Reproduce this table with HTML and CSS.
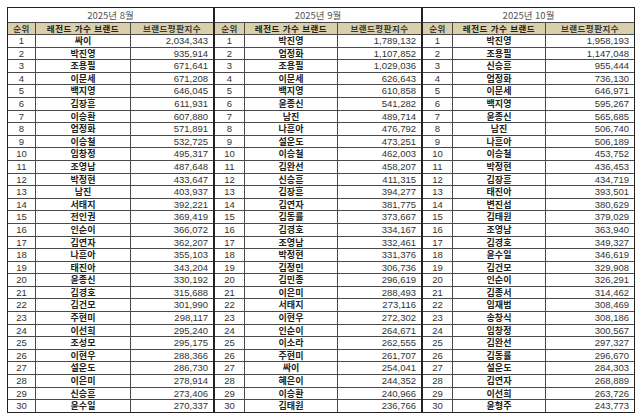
FILE: index.html
```html
<!DOCTYPE html>
<html lang="ko">
<head>
<meta charset="utf-8">
<title>레전드 가수 브랜드평판지수</title>
<link rel="stylesheet" href="styles.css">
</head>
<body>
<div class="wrap">
  <div class="month m1">
    <div class="title">2025년 8월</div>
    <div class="row head"><span>순위</span><span>레전드 가수 브랜드</span><span>브랜드평판지수</span></div>
    <div class="row"><span>1</span><span>싸이</span><span>2,034,343</span></div>
    <div class="row"><span>2</span><span>박진영</span><span>935,914</span></div>
    <div class="row"><span>3</span><span>조용필</span><span>671,641</span></div>
    <div class="row"><span>4</span><span>이문세</span><span>671,208</span></div>
    <div class="row"><span>5</span><span>백지영</span><span>646,045</span></div>
    <div class="row"><span>6</span><span>김장훈</span><span>611,931</span></div>
    <div class="row"><span>7</span><span>이승환</span><span>607,880</span></div>
    <div class="row"><span>8</span><span>엄정화</span><span>571,891</span></div>
    <div class="row"><span>9</span><span>이승철</span><span>532,725</span></div>
    <div class="row"><span>10</span><span>임창정</span><span>495,317</span></div>
    <div class="row"><span>11</span><span>조영남</span><span>487,648</span></div>
    <div class="row"><span>12</span><span>박정현</span><span>433,647</span></div>
    <div class="row"><span>13</span><span>남진</span><span>403,937</span></div>
    <div class="row"><span>14</span><span>서태지</span><span>392,221</span></div>
    <div class="row"><span>15</span><span>전인권</span><span>369,419</span></div>
    <div class="row"><span>16</span><span>인순이</span><span>366,072</span></div>
    <div class="row"><span>17</span><span>김연자</span><span>362,207</span></div>
    <div class="row"><span>18</span><span>나훈아</span><span>355,103</span></div>
    <div class="row"><span>19</span><span>태진아</span><span>343,204</span></div>
    <div class="row"><span>20</span><span>윤종신</span><span>330,192</span></div>
    <div class="row"><span>21</span><span>김경호</span><span>315,688</span></div>
    <div class="row"><span>22</span><span>김건모</span><span>301,990</span></div>
    <div class="row"><span>23</span><span>주현미</span><span>298,117</span></div>
    <div class="row"><span>24</span><span>이선희</span><span>295,240</span></div>
    <div class="row"><span>25</span><span>조성모</span><span>295,175</span></div>
    <div class="row"><span>26</span><span>이현우</span><span>288,366</span></div>
    <div class="row"><span>27</span><span>설운도</span><span>286,730</span></div>
    <div class="row"><span>28</span><span>이은미</span><span>278,914</span></div>
    <div class="row"><span>29</span><span>신승훈</span><span>273,406</span></div>
    <div class="row"><span>30</span><span>윤수일</span><span>270,337</span></div>
  </div>
  <div class="month m2">
    <div class="title">2025년 9월</div>
    <div class="row head"><span>순위</span><span>레전드 가수 브랜드</span><span>브랜드평판지수</span></div>
    <div class="row"><span>1</span><span>박진영</span><span>1,789,132</span></div>
    <div class="row"><span>2</span><span>엄정화</span><span>1,107,852</span></div>
    <div class="row"><span>3</span><span>조용필</span><span>1,029,036</span></div>
    <div class="row"><span>4</span><span>이문세</span><span>626,643</span></div>
    <div class="row"><span>5</span><span>백지영</span><span>610,858</span></div>
    <div class="row"><span>6</span><span>윤종신</span><span>541,282</span></div>
    <div class="row"><span>7</span><span>남진</span><span>489,714</span></div>
    <div class="row"><span>8</span><span>나훈아</span><span>476,792</span></div>
    <div class="row"><span>9</span><span>설운도</span><span>473,251</span></div>
    <div class="row"><span>10</span><span>이승철</span><span>462,003</span></div>
    <div class="row"><span>11</span><span>김완선</span><span>458,207</span></div>
    <div class="row"><span>12</span><span>신승훈</span><span>411,315</span></div>
    <div class="row"><span>13</span><span>김장훈</span><span>394,277</span></div>
    <div class="row"><span>14</span><span>김연자</span><span>381,775</span></div>
    <div class="row"><span>15</span><span>김동률</span><span>373,667</span></div>
    <div class="row"><span>16</span><span>김경호</span><span>334,167</span></div>
    <div class="row"><span>17</span><span>조영남</span><span>332,461</span></div>
    <div class="row"><span>18</span><span>박정현</span><span>331,376</span></div>
    <div class="row"><span>19</span><span>김정민</span><span>306,736</span></div>
    <div class="row"><span>20</span><span>김민종</span><span>296,619</span></div>
    <div class="row"><span>21</span><span>이은미</span><span>288,493</span></div>
    <div class="row"><span>22</span><span>서태지</span><span>273,116</span></div>
    <div class="row"><span>23</span><span>이현우</span><span>272,302</span></div>
    <div class="row"><span>24</span><span>인순이</span><span>264,671</span></div>
    <div class="row"><span>25</span><span>이소라</span><span>262,555</span></div>
    <div class="row"><span>26</span><span>주현미</span><span>261,707</span></div>
    <div class="row"><span>27</span><span>싸이</span><span>254,041</span></div>
    <div class="row"><span>28</span><span>혜은이</span><span>244,352</span></div>
    <div class="row"><span>29</span><span>이승환</span><span>240,966</span></div>
    <div class="row"><span>30</span><span>김태원</span><span>236,766</span></div>
  </div>
  <div class="month m3">
    <div class="title">2025년 10월</div>
    <div class="row head"><span>순위</span><span>레전드 가수 브랜드</span><span>브랜드평판지수</span></div>
    <div class="row"><span>1</span><span>박진영</span><span>1,958,193</span></div>
    <div class="row"><span>2</span><span>조용필</span><span>1,147,048</span></div>
    <div class="row"><span>3</span><span>신승훈</span><span>955,444</span></div>
    <div class="row"><span>4</span><span>엄정화</span><span>736,130</span></div>
    <div class="row"><span>5</span><span>이문세</span><span>646,971</span></div>
    <div class="row"><span>6</span><span>백지영</span><span>595,267</span></div>
    <div class="row"><span>7</span><span>윤종신</span><span>565,685</span></div>
    <div class="row"><span>8</span><span>남진</span><span>506,740</span></div>
    <div class="row"><span>9</span><span>나훈아</span><span>506,189</span></div>
    <div class="row"><span>10</span><span>이승철</span><span>453,752</span></div>
    <div class="row"><span>11</span><span>박정현</span><span>436,453</span></div>
    <div class="row"><span>12</span><span>김장훈</span><span>434,719</span></div>
    <div class="row"><span>13</span><span>태진아</span><span>393,501</span></div>
    <div class="row"><span>14</span><span>변진섭</span><span>380,629</span></div>
    <div class="row"><span>15</span><span>김태원</span><span>379,029</span></div>
    <div class="row"><span>16</span><span>조영남</span><span>363,940</span></div>
    <div class="row"><span>17</span><span>김경호</span><span>349,327</span></div>
    <div class="row"><span>18</span><span>윤수일</span><span>346,619</span></div>
    <div class="row"><span>19</span><span>김건모</span><span>329,908</span></div>
    <div class="row"><span>20</span><span>인순이</span><span>326,291</span></div>
    <div class="row"><span>21</span><span>김종서</span><span>314,462</span></div>
    <div class="row"><span>22</span><span>임재범</span><span>308,469</span></div>
    <div class="row"><span>23</span><span>송창식</span><span>308,186</span></div>
    <div class="row"><span>24</span><span>임창정</span><span>300,567</span></div>
    <div class="row"><span>25</span><span>김완선</span><span>297,327</span></div>
    <div class="row"><span>26</span><span>김동률</span><span>296,670</span></div>
    <div class="row"><span>27</span><span>설운도</span><span>284,303</span></div>
    <div class="row"><span>28</span><span>김연자</span><span>268,889</span></div>
    <div class="row"><span>29</span><span>이선희</span><span>263,726</span></div>
    <div class="row"><span>30</span><span>윤형주</span><span>243,773</span></div>
  </div>
</div>
</body>
</html>
```

FILE: styles.css
```css
html, body {
  margin: 0;
  padding: 0;
  background: #ffffff;
}

body {
  font-family: "Noto Sans CJK KR", "Noto Sans", sans-serif;
  font-size: 9px;
  color: #333333;
}

.wrap {
  display: flex;
  padding: 7px 0 0 7px;
}

.month {
  display: grid;
  grid-template-rows: 14px 11px repeat(30, 11.6px);
  gap: 1px;
  background: #4a4a4a;
  border: 1px solid #222222;
}

.m1 {
  width: 205px;
  grid-template-columns: 27px 94px 1fr;
}

.m2 {
  width: 206px;
  grid-template-columns: 29px 92px 1fr;
}

.m3 {
  width: 211px;
  grid-template-columns: 29px 92px 1fr;
}

.title {
  grid-column: 1 / -1;
  background: #ffffff;
  color: #555555;
  text-align: center;
  line-height: 14px;
  font-size: 9.5px;
}

.row {
  display: contents;
}

.row span {
  background: #ffffff;
  line-height: 11.6px;
  white-space: nowrap;
}

.row span:nth-child(1) {
  text-align: center;
  font-family: "Liberation Sans", Arial, sans-serif;
  font-size: 9.5px;
}

.row span:nth-child(2) {
  text-align: center;
  font-weight: 700;
  color: #222222;
}

.row span:nth-child(3) {
  text-align: right;
  padding-right: 5px;
  font-family: "Liberation Sans", Arial, sans-serif;
  font-size: 9.5px;
}

.head span {
  background: #d9cfab;
  line-height: 11px;
  font-weight: 700;
  color: #3a3a3a;
  text-align: center !important;
  padding-right: 0 !important;
  letter-spacing: 0.5px;
  font-size: 8.5px !important;
  font-family: "Noto Sans CJK KR", "Noto Sans", sans-serif !important;
}
```
